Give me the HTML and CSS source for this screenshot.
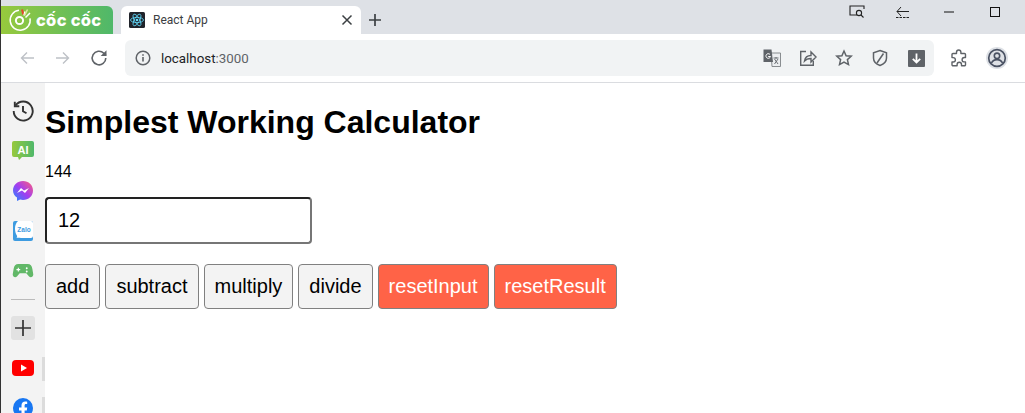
FILE: index.html

```html
<!DOCTYPE html>
<html>
<head>
  <title>React App</title>
  <link rel="stylesheet" href="styles.css">
</head>
<body>
  <div class="tabstrip">
    <div class="brand">
      <svg class="brand-logo" width="24" height="24" viewBox="0 0 24 24">
        <path d="M11 2.300a10 10 0 1 0 11 8" fill="none" stroke="#fff" stroke-width="1.500"/>
        <circle cx="11.500" cy="12.500" r="3.600" fill="none" stroke="#fff" stroke-width="2"/>
        <path d="M14 1.500l1.300 5" stroke="#e8452c" stroke-width="2"/>
        <path d="M17 3.500l-1 4M22 5l-4.500 4.500" stroke="#fff" stroke-width="1.500"/>
        <path d="M19.500 1.500l-3 6" stroke="#dfe9a0" stroke-width="1.500"/>
      </svg>
      <span class="brand-name">cốc cốc</span>
    </div>
    <div class="tab">
      <svg class="favicon" width="16" height="16" viewBox="0 0 16 16">
        <rect width="16" height="16" rx="1.500" fill="#20232a"/>
        <g fill="none" stroke="#61dafb" stroke-width=".8">
          <ellipse cx="8" cy="8" rx="6.500" ry="2.600"/>
          <ellipse cx="8" cy="8" rx="6.500" ry="2.600" transform="rotate(60 8 8)"/>
          <ellipse cx="8" cy="8" rx="6.500" ry="2.600" transform="rotate(120 8 8)"/>
        </g>
        <circle cx="8" cy="8" r="1.300" fill="#61dafb"/>
      </svg>
      <span class="tab-title">React App</span>
      <svg class="tab-close" width="12" height="12" viewBox="0 0 12 12">
        <path d="M1.500 1.500l9 9M10.500 1.500l-9 9" stroke="#3c4043" stroke-width="1.500"/>
      </svg>
    </div>
    <svg class="new-tab" width="14" height="14" viewBox="0 0 14 14">
      <path d="M7 1v12M1 7h12" stroke="#3c4043" stroke-width="1.700"/>
    </svg>
    <div class="window-controls">
      <div class="win-btn">
        <svg width="18" height="14" viewBox="0 0 18 14" fill="none" stroke="#222" stroke-width="1.100">
          <path d="M9 10H2V1h14v3"/>
          <circle cx="11" cy="8" r="2.600"/>
          <path d="M13 10l2.500 2.500"/>
        </svg>
      </div>
      <div class="win-btn">
        <svg width="16" height="14" viewBox="0 0 16 14" fill="none" stroke="#222" stroke-width="1">
          <path d="M14 6.500H2M6 2L2 6.500 6 11"/>
          <path d="M1 12.500h14" stroke-dasharray="2.500 1"/>
        </svg>
      </div>
      <div class="win-btn">
        <svg width="12" height="2" viewBox="0 0 12 2"><path d="M1 1h10" stroke="#111" stroke-width="1"/></svg>
      </div>
      <div class="win-btn">
        <svg width="12" height="12" viewBox="0 0 12 12"><rect x="1.500" y="1.500" width="9" height="9" fill="none" stroke="#111"/></svg>
      </div>
    </div>
  </div>

  <div class="toolbar">
    <div class="nav-btn">
      <svg width="14" height="14" viewBox="0 0 14 14" fill="none" stroke="#bdc1c6" stroke-width="1.400">
        <path d="M14 7H1.500M7 1.500L1.500 7 7 12.500"/>
      </svg>
    </div>
    <div class="nav-btn">
      <svg width="14" height="14" viewBox="0 0 14 14" fill="none" stroke="#bdc1c6" stroke-width="1.400">
        <path d="M0 7h12.500M7 1.500L12.500 7 7 12.500"/>
      </svg>
    </div>
    <div class="nav-btn">
      <svg width="18" height="18" viewBox="0 0 18 18" fill="none" stroke="#5f6368" stroke-width="1.600">
        <path d="M15.800 9a6.800 6.800 0 1 1-2-4.800L16 6.500"/>
        <path d="M16.500 1.200v5.800h-5.800" fill="#5f6368" stroke="none"/>
      </svg>
    </div>
    <div class="omnibox">
      <svg class="info-icon" width="16" height="16" viewBox="0 0 16 16">
        <circle cx="8" cy="8" r="6.800" fill="none" stroke="#5f6368" stroke-width="1.500"/>
        <path d="M7.200 7h1.600v4.500H7.200zM7.200 4.200h1.600v1.600H7.200z" fill="#5f6368"/>
      </svg>
      <span class="url">localhost<span class="url-port">:3000</span></span>
      <div class="omni-actions">
        <div class="omni-btn">
          <svg width="18" height="18" viewBox="0 0 18 18">
            <path d="M8 4h9.500v13.500H9z" fill="#eceef0" stroke="#7d8185" stroke-width=".9"/>
            <path d="M0.500 0.500h8l1.500 12.500H0.500z" fill="#5f6368"/>
            <path d="M7 5.500a2.300 2.300 0 1 0 .5 2H5.200" fill="none" stroke="#fff" stroke-width="1"/>
            <path d="M10.500 9h5M13 8v1.500M11.500 15l3.500-5M11.500 10l3.500 5" stroke="#5f6368" stroke-width=".9"/>
          </svg>
        </div>
        <div class="omni-btn">
          <svg width="18" height="18" viewBox="0 0 18 18" fill="none" stroke="#5f6368" stroke-width="1.400">
            <path d="M7 2.500H1.700v13.800h12.600V12"/>
            <path d="M5.500 12c.5-3.500 3-5.500 6.500-5.500V3l5 5-5 5V9.500c-3 0-5 .7-6.500 2.500z"/>
          </svg>
        </div>
        <div class="omni-btn">
          <svg width="18" height="18" viewBox="0 0 18 18" fill="none" stroke="#5f6368" stroke-width="1.500">
            <path d="M9 2l2.100 4.700 5.100.5-3.800 3.400 1.100 5L9 13l-4.500 2.600 1.100-5L1.800 7.200l5.100-.5z"/>
          </svg>
        </div>
        <div class="omni-btn">
          <svg width="18" height="18" viewBox="0 0 18 18" fill="none" stroke="#5f6368" stroke-width="1.500">
            <path d="M9 1.500l6.500 2.300V9c0 3.600-2.800 6.200-6.500 7.500C5.300 15.200 2.500 12.600 2.500 9V3.800z"/>
            <path d="M12.500 4.500L6 14"/>
          </svg>
        </div>
        <div class="omni-btn">
          <svg width="17" height="17" viewBox="0 0 17 17">
            <rect width="17" height="17" rx="1" fill="#5f6368"/>
            <path d="M8.500 3.500v9M4.800 8.800l3.700 3.700 3.700-3.700" fill="none" stroke="#fff" stroke-width="1.800"/>
          </svg>
        </div>
      </div>
    </div>
    <div class="toolbar-end">
      <div class="omni-btn">
        <svg width="18" height="18" viewBox="0 0 18 18" fill="none" stroke="#5f6368" stroke-width="1.400" stroke-linejoin="round">
          <path d="M6.500 4.500V3.200a2.200 2.200 0 0 1 4.400 0v1.300h3.600a1 1 0 0 1 1 1v3h-1.200a2.200 2.200 0 0 0 0 4.400h1.200v2.800a1 1 0 0 1-1 1h-3v-1.200a2.200 2.200 0 0 0-4.400 0v1.200H3a1 1 0 0 1-1-1V13h1.200a2.200 2.200 0 0 0 0-4.400H2V5.500a1 1 0 0 1 1-1z"/>
        </svg>
      </div>
      <div class="omni-btn profile-btn">
        <svg width="22" height="22" viewBox="0 0 22 22">
          <circle cx="11" cy="11" r="11" fill="#dee1e6"/>
          <circle cx="11" cy="11" r="8.300" fill="none" stroke="#4a5263" stroke-width="1.700"/>
          <circle cx="11" cy="8.800" r="2.700" fill="none" stroke="#4a5263" stroke-width="1.600"/>
          <path d="M5.500 16c1-2.400 3-3.400 5.500-3.400s4.500 1 5.500 3.400" fill="none" stroke="#4a5263" stroke-width="1.600"/>
        </svg>
      </div>
    </div>
  </div>

  <div class="page">
    <div class="sidebar">
      <div class="side-item">
        <svg width="22" height="22" viewBox="0 0 22 22" fill="none" stroke="#333" stroke-width="1.900">
          <path d="M3.500 5.500A9.500 9.500 0 1 1 1.700 11"/>
          <path d="M2.800 1.800v4.500h4.500"/>
          <path d="M11 6v5.300l3.500 2"/>
        </svg>
      </div>
      <div class="side-item">
        <svg width="22" height="20" viewBox="0 0 22 20">
          <defs>
            <linearGradient id="aiGrad" x1="0" y1="0" x2="1" y2="0">
              <stop offset="0" stop-color="#97c93d"/>
              <stop offset="1" stop-color="#4fb86a"/>
            </linearGradient>
          </defs>
          <path d="M2 0h18a2 2 0 0 1 2 2v12a2 2 0 0 1-2 2H10l-3 3-1-3H2a2 2 0 0 1-2-2V2a2 2 0 0 1 2-2z" fill="url(#aiGrad)"/>
          <text class="ai-label" x="11" y="12.500" text-anchor="middle">AI</text>
        </svg>
      </div>
      <div class="side-item">
        <svg width="20" height="20" viewBox="0 0 20 20">
          <defs>
            <linearGradient id="msgGrad" x1="0" y1="1" x2="1" y2="0">
              <stop offset="0" stop-color="#1f8bff"/>
              <stop offset=".5" stop-color="#a33df0"/>
              <stop offset="1" stop-color="#ff5f7a"/>
            </linearGradient>
          </defs>
          <path d="M10 0c5.600 0 10 4.100 10 9.500S15.600 19 10 19c-1 0-2-.1-2.900-.4L4 20v-3.400C1.500 14.900 0 12.400 0 9.500 0 4.100 4.400 0 10 0z" fill="url(#msgGrad)"/>
          <path d="M4 12l4-5 3 2.500L16 7l-4 5-3-2.500z" fill="#fff"/>
        </svg>
      </div>
      <div class="side-item">
        <svg width="20" height="20" viewBox="0 0 20 20">
          <rect width="20" height="20" rx="2" fill="#3d9be0"/>
          <path d="M5 0h13a2 2 0 0 1 2 2v13a2 2 0 0 1-2 2H8c-1.500 0-3-.5-4.500 0 .7-.8.7-1.500.5-2.200C2.500 12.500 2 10 2 7.500 2 4.500 3 2 5 0z" fill="#fff"/>
          <text class="zalo-label" x="11" y="11" text-anchor="middle">Zalo</text>
        </svg>
      </div>
      <div class="side-item">
        <svg width="22" height="14" viewBox="0 0 22 15">
          <path d="M6 0h10c3 0 4.500 2 5 5l1 6c.3 2.500-2.500 4.500-4.500 2.500L14.500 10h-7l-3 3.500C2.500 15.500-.3 13.500 0 11l1-6c.5-3 2-5 5-5z" fill="#62b868"/>
          <path d="M4 6h4M6 4v4" stroke="#fff" stroke-width="1.200"/>
          <circle cx="15" cy="4.500" r="1" fill="#fff"/>
          <circle cx="15" cy="8" r="1" fill="#fff"/>
        </svg>
      </div>
      <hr class="side-divider">
      <div class="side-item">
        <div class="side-add">
          <svg width="18" height="18" viewBox="0 0 18 18"><path d="M9 1v16M1 9h16" stroke="#333" stroke-width="1.700"/></svg>
        </div>
      </div>
      <div class="side-item side-item-pinned">
        <svg width="22" height="16" viewBox="0 0 22 16">
          <rect width="22" height="16" rx="4" fill="#f00"/>
          <path d="M9 4.500l6 3.500-6 3.500z" fill="#fff"/>
        </svg>
      </div>
      <div class="side-item side-item-pinned">
        <svg width="20" height="20" viewBox="0 0 20 20">
          <circle cx="10" cy="10" r="10" fill="#1877f2"/>
          <path d="M8.500 20v-7.500H6V9.500h2.500V7.300C8.500 4.800 10 3.500 12.200 3.500c1 0 2 .2 2 .2V6h-1.100c-1.200 0-1.500.7-1.500 1.500v2h2.600l-.4 3h-2.200V20z" fill="#fff"/>
        </svg>
      </div>
    </div>

    <div class="calculator">
      <h1>Simplest Working Calculator</h1>
      <p>144</p>
      <input class="number-input" type="text" value="12">
      <div class="buttons">
        <button>add</button>
        <button>subtract</button>
        <button>multiply</button>
        <button>divide</button>
        <button class="reset">resetInput</button>
        <button class="reset">resetResult</button>
      </div>
    </div>
  </div>
</body>
</html>
```

FILE: styles.css

```css
html, body {
  height: 100%;
}
body {
  margin: 0;
  display: flex;
  flex-direction: column;
  overflow: hidden;
  border-left: 1px solid #333;
  box-sizing: border-box;
  font-family: "Liberation Sans", Arial, sans-serif;
  background: white;
  color: black;
}

/* browser chrome */
.tabstrip {
  height: 34px;
  flex: none;
  display: flex;
  align-items: flex-end;
  background: #dee1e6;
}
.brand {
  width: 112px;
  height: 28px;
  display: flex;
  align-items: center;
  gap: 4px;
  border-radius: 0 6px 0 0;
  background: linear-gradient(90deg, #97c93d, #4fb86a);
}
.brand-logo {
  margin-left: 7px;
}
.brand-name {
  font-family: "Inter", sans-serif;
  font-size: 16.500px;
  font-weight: 800;
  letter-spacing: .3px;
  color: white;
}
.tab {
  width: 240px;
  height: 28px;
  margin-left: 8px;
  display: flex;
  align-items: center;
  border-radius: 6px 6px 0 0;
  background: white;
}
.favicon {
  margin-left: 8px;
}
.tab-title {
  margin-left: 8px;
  font-family: Roboto, sans-serif;
  font-size: 12px;
  color: #3c4043;
}
.tab-close {
  margin-left: auto;
  margin-right: 8px;
}
.new-tab {
  margin: 0 0 7px 7px;
}
.window-controls {
  margin-left: auto;
  margin-right: 7px;
  align-self: flex-start;
  display: flex;
}
.win-btn {
  width: 46px;
  height: 24px;
  display: flex;
  align-items: center;
  justify-content: center;
}

.toolbar {
  height: 48px;
  flex: none;
  display: flex;
  align-items: center;
  padding-left: 8px;
  border-bottom: 1px solid #dadce0;
  background: white;
}
.nav-btn {
  width: 36px;
  height: 36px;
  display: flex;
  align-items: center;
  justify-content: center;
}
.omnibox {
  width: 809px;
  height: 36px;
  margin-left: 8px;
  display: flex;
  align-items: center;
  border-radius: 6px;
  background: #f1f3f4;
}
.info-icon {
  margin-left: 10px;
}
.url {
  margin-left: 10px;
  font-family: Roboto, sans-serif;
  font-size: 13.330px;
  color: #202124;
}
.url-port {
  color: #5f6368;
}
.omni-actions {
  margin-left: auto;
  display: flex;
}
.omni-btn {
  width: 36px;
  height: 36px;
  display: flex;
  align-items: center;
  justify-content: center;
}
.toolbar-end {
  margin-left: 7px;
  display: flex;
}
.profile-btn {
  margin-left: 2px;
}

/* page area */
.page {
  flex: 1;
  min-height: 0;
  display: flex;
}
.sidebar {
  width: 44px;
  flex: none;
  padding-top: 8px;
  box-sizing: border-box;
  background: #f3f3f3;
}
.side-item {
  position: relative;
  height: 40px;
  display: flex;
  align-items: center;
  justify-content: center;
  padding-right: 1px;
}
.side-item-pinned::after {
  content: "";
  position: absolute;
  right: 0;
  top: 9px;
  width: 3px;
  height: 24px;
  background: #dcdcdc;
}
.ai-label {
  font-family: "Liberation Sans", Arial, sans-serif;
  font-size: 11px;
  font-weight: bold;
  fill: white;
}
.zalo-label {
  font-family: "Liberation Sans", Arial, sans-serif;
  font-size: 6.500px;
  font-weight: bold;
  fill: #3d9be0;
}
.side-divider {
  width: 24px;
  height: 1px;
  margin: 8px 0 8px 10px;
  border: none;
  background: #bbb;
}
.side-add {
  width: 24px;
  height: 24px;
  display: flex;
  align-items: center;
  justify-content: center;
  border-radius: 3px;
  background: #e2e2e2;
}

.calculator {
  flex: 1;
}
h1 {
  font-size: 32px;
  margin: 21px 0 22px;
}
p {
  margin: 16px 0;
  font-size: 16px;
}
.number-input {
  display: block;
  width: 267px;
  box-sizing: border-box;
  padding: 10px 11px;
  font-family: "Liberation Sans", Arial, sans-serif;
  font-size: 20px;
  border: 2px solid;
  border-color: #222 #767676 #767676 #222;
  border-radius: 4px;
  outline: none;
}
.buttons {
  display: flex;
  gap: 5px;
  margin-top: 20px;
}
button {
  padding: 10px;
  font-family: "Liberation Sans", Arial, sans-serif;
  font-size: 20px;
  color: black;
  background: #f3f3f3;
  border: 1px solid #808080;
  border-radius: 4px;
  cursor: pointer;
}
button.reset {
  color: white;
  background: tomato;
}
```
